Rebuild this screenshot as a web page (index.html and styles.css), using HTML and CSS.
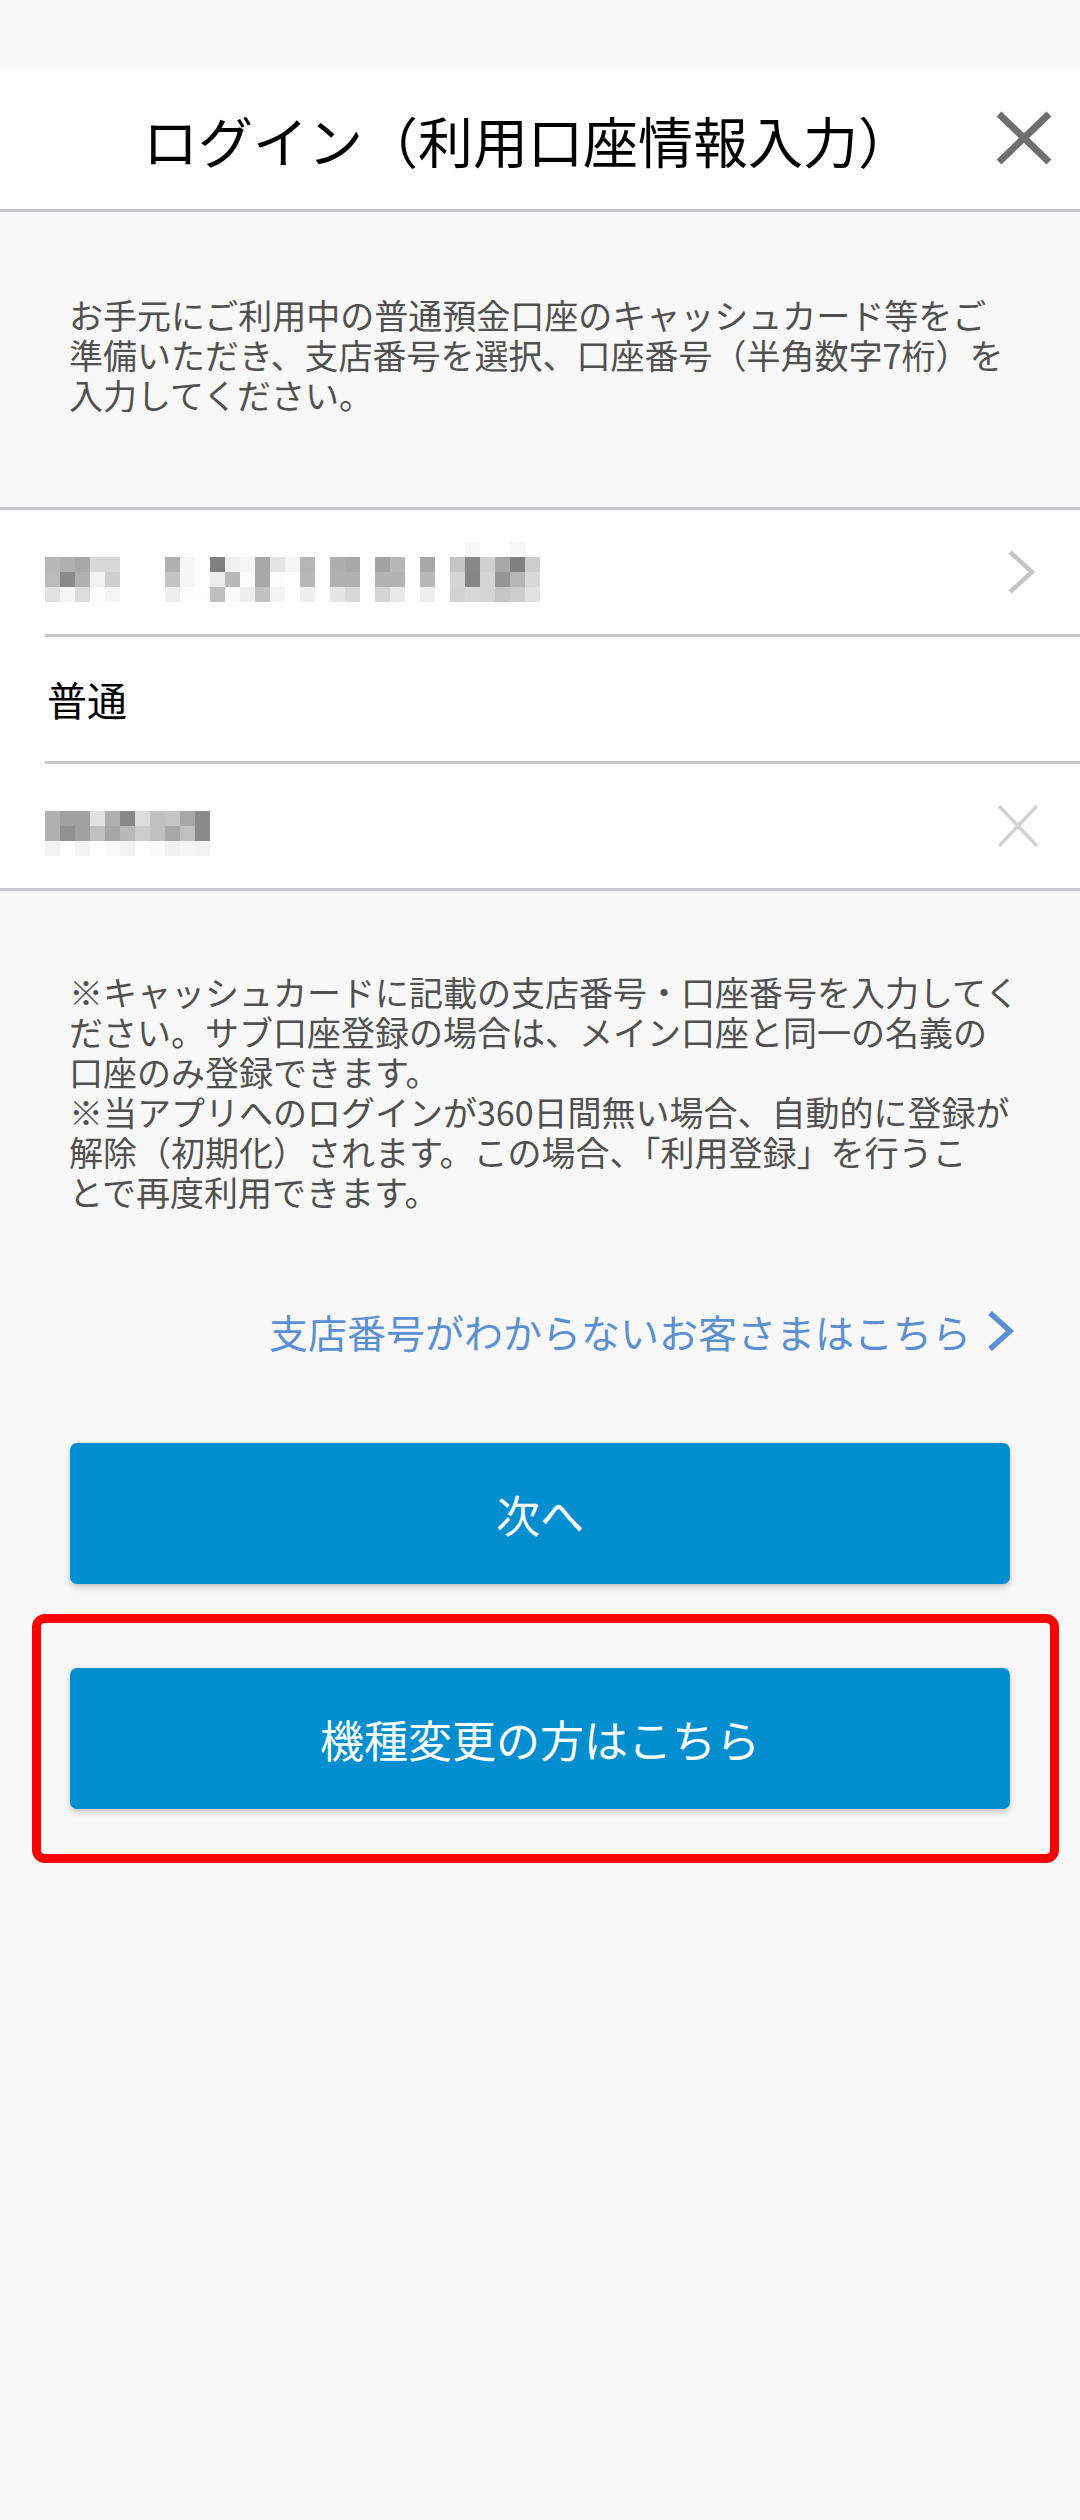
FILE: index.html
```html
<!DOCTYPE html>
<html lang="ja">

<head>
    <meta charset="UTF-8">
    <title>ログイン（利用口座情報入力）</title>
    <link rel="stylesheet" href="styles.css">
</head>

<body>
    <div class="status-bar"></div>
    <div class="header">
        <h1 class="header-title">ログイン（利用口座情報入力）</h1>
        <svg class="header-close" width="60" height="60" viewBox="0 0 60 60">
            <path d="M7 5 L57 53 M57 5 L7 53" stroke="#6f6f6f" stroke-width="7" fill="none"/>
        </svg>
    </div>

    <div class="intro">
        <p>お手元にご利用中の普通預金口座のキャッシュカード等をご<br>準備いただき、支店番号を選択、口座番号（半角数字7桁）を<br>入力してください。</p>
    </div>

    <ul class="fields">
        <li class="field">
            <!-- 支店名 (モザイク) -->
            <svg class="mosaic" width="500" height="60" viewBox="0 0 500 60" shape-rendering="crispEdges">
                <rect x="0" y="15" width="15" height="15" fill="#b8b8b8"/><rect x="0" y="30" width="15" height="15" fill="#bbbbbb"/><rect x="0" y="45" width="15" height="15" fill="#e2e2e2"/>
                <rect x="15" y="15" width="15" height="15" fill="#b0b0b0"/><rect x="15" y="30" width="15" height="15" fill="#8a8a8a"/><rect x="15" y="45" width="15" height="15" fill="#f5f5f5"/>
                <rect x="30" y="15" width="15" height="15" fill="#a8a8a8"/><rect x="30" y="30" width="15" height="15" fill="#b0b0b0"/><rect x="30" y="45" width="15" height="15" fill="#dcdcdc"/>
                <rect x="45" y="15" width="15" height="15" fill="#d8d8d8"/><rect x="45" y="30" width="15" height="15" fill="#f2f2f2"/><rect x="45" y="45" width="15" height="15" fill="#fcfcfc"/>
                <rect x="60" y="15" width="15" height="15" fill="#d8d8d8"/><rect x="60" y="30" width="15" height="15" fill="#cfcfcf"/><rect x="60" y="45" width="15" height="15" fill="#f5f5f5"/>

                <rect x="120" y="15" width="15" height="15" fill="#b0b0b0"/><rect x="120" y="30" width="15" height="15" fill="#c4c4c4"/><rect x="120" y="45" width="15" height="15" fill="#eeeeee"/>
                <rect x="135" y="15" width="15" height="15" fill="#f7f7f7"/><rect x="135" y="30" width="15" height="15" fill="#f7f7f7"/><rect x="135" y="45" width="15" height="15" fill="#fdfdfd"/>
                <rect x="150" y="45" width="15" height="15" fill="#fdfdfd"/>
                <rect x="165" y="15" width="15" height="15" fill="#808080"/><rect x="165" y="30" width="15" height="15" fill="#ededed"/><rect x="165" y="45" width="15" height="15" fill="#bebebe"/>
                <rect x="180" y="15" width="15" height="15" fill="#f0f0f0"/><rect x="180" y="30" width="15" height="15" fill="#b8b8b8"/><rect x="180" y="45" width="15" height="15" fill="#fafafa"/>
                <rect x="195" y="15" width="15" height="15" fill="#f7f7f7"/><rect x="195" y="30" width="15" height="15" fill="#fcfcfc"/><rect x="195" y="45" width="15" height="15" fill="#efefef"/>
                <rect x="210" y="15" width="15" height="15" fill="#a8a8a8"/><rect x="210" y="30" width="15" height="15" fill="#a8a8a8"/><rect x="210" y="45" width="15" height="15" fill="#c0c0c0"/>
                <rect x="225" y="15" width="15" height="15" fill="#e5e5e5"/><rect x="225" y="30" width="15" height="15" fill="#fdfdfd"/><rect x="225" y="45" width="15" height="15" fill="#f3f3f3"/>
                <rect x="240" y="15" width="15" height="15" fill="#f5f5f5"/>
                <rect x="255" y="15" width="15" height="15" fill="#b5b5b5"/><rect x="255" y="30" width="15" height="15" fill="#b8b8b8"/><rect x="255" y="45" width="15" height="15" fill="#efefef"/>

                <rect x="285" y="15" width="15" height="15" fill="#aeaeae"/><rect x="285" y="30" width="15" height="15" fill="#b0b0b0"/><rect x="285" y="45" width="15" height="15" fill="#e5e5e5"/>
                <rect x="300" y="15" width="15" height="15" fill="#a8a8a8"/><rect x="300" y="30" width="15" height="15" fill="#b0b0b0"/><rect x="300" y="45" width="15" height="15" fill="#d8d8d8"/>

                <rect x="330" y="15" width="15" height="15" fill="#a3a3a3"/><rect x="330" y="30" width="15" height="15" fill="#b3b3b3"/><rect x="330" y="45" width="15" height="15" fill="#d5d5d5"/>
                <rect x="345" y="15" width="15" height="15" fill="#b8b8b8"/><rect x="345" y="30" width="15" height="15" fill="#b3b3b3"/><rect x="345" y="45" width="15" height="15" fill="#e8e8e8"/>

                <rect x="375" y="15" width="15" height="15" fill="#a8a8a8"/><rect x="375" y="30" width="15" height="15" fill="#b8b8b8"/><rect x="375" y="45" width="15" height="15" fill="#eeeeee"/>

                <rect x="405" y="15" width="15" height="15" fill="#c5c5c5"/><rect x="405" y="30" width="15" height="15" fill="#d5d5d5"/><rect x="405" y="45" width="15" height="15" fill="#d2d2d2"/>
                <rect x="420" y="0" width="15" height="15" fill="#f8f8f8"/><rect x="420" y="15" width="15" height="15" fill="#888888"/><rect x="420" y="30" width="15" height="15" fill="#858585"/><rect x="420" y="45" width="15" height="15" fill="#d8d8d8"/>
                <rect x="435" y="15" width="15" height="15" fill="#d0d0d0"/><rect x="435" y="30" width="15" height="15" fill="#d5d5d5"/><rect x="435" y="45" width="15" height="15" fill="#d5d5d5"/>
                <rect x="450" y="15" width="15" height="15" fill="#a8a8a8"/><rect x="450" y="30" width="15" height="15" fill="#959595"/><rect x="450" y="45" width="15" height="15" fill="#c5c5c5"/>
                <rect x="465" y="0" width="15" height="15" fill="#f8f8f8"/><rect x="465" y="15" width="15" height="15" fill="#808080"/><rect x="465" y="30" width="15" height="15" fill="#b5b5b5"/><rect x="465" y="45" width="15" height="15" fill="#cccccc"/>
                <rect x="480" y="15" width="15" height="15" fill="#cccccc"/><rect x="480" y="30" width="15" height="15" fill="#d8d8d8"/><rect x="480" y="45" width="15" height="15" fill="#e2e2e2"/>
            </svg>
            <svg class="field-icon" width="40" height="50" viewBox="0 0 40 50">
                <path d="M12 5 L34 25 L12 45" stroke="#c6c6c6" stroke-width="4.5" fill="none"/>
            </svg>
        </li>
        <li class="field">
            <span class="field-text">普通</span>
        </li>
        <li class="field">
            <!-- 口座番号 (モザイク) -->
            <svg class="mosaic" width="165" height="60" viewBox="0 0 165 60" shape-rendering="crispEdges">
                <rect x="0" y="15" width="15" height="15" fill="#b0b0b0"/><rect x="0" y="30" width="15" height="15" fill="#b0b0b0"/><rect x="0" y="45" width="15" height="15" fill="#f3f3f3"/>
                <rect x="15" y="15" width="15" height="15" fill="#a0a0a0"/><rect x="15" y="30" width="15" height="15" fill="#909090"/><rect x="15" y="45" width="15" height="15" fill="#fefefe"/>
                <rect x="30" y="15" width="15" height="15" fill="#a0a0a0"/><rect x="30" y="30" width="15" height="15" fill="#a0a0a0"/><rect x="30" y="45" width="15" height="15" fill="#f3f3f3"/>
                <rect x="45" y="15" width="15" height="15" fill="#e2e2e2"/><rect x="45" y="30" width="15" height="15" fill="#c0c0c0"/><rect x="45" y="45" width="15" height="15" fill="#fefefe"/>
                <rect x="60" y="15" width="15" height="15" fill="#b0b0b0"/><rect x="60" y="30" width="15" height="15" fill="#a5a5a5"/><rect x="60" y="45" width="15" height="15" fill="#fbfbfb"/>
                <rect x="75" y="15" width="15" height="15" fill="#888888"/><rect x="75" y="30" width="15" height="15" fill="#b8b8b8"/><rect x="75" y="45" width="15" height="15" fill="#f3f3f3"/>
                <rect x="90" y="15" width="15" height="15" fill="#dcdcdc"/><rect x="90" y="30" width="15" height="15" fill="#cccccc"/><rect x="90" y="45" width="15" height="15" fill="#fefefe"/>
                <rect x="105" y="15" width="15" height="15" fill="#c0c0c0"/><rect x="105" y="30" width="15" height="15" fill="#c0c0c0"/><rect x="105" y="45" width="15" height="15" fill="#fbfbfb"/>
                <rect x="120" y="15" width="15" height="15" fill="#c5c5c5"/><rect x="120" y="30" width="15" height="15" fill="#a8a8a8"/><rect x="120" y="45" width="15" height="15" fill="#f0f0f0"/>
                <rect x="135" y="15" width="15" height="15" fill="#a8a8a8"/><rect x="135" y="30" width="15" height="15" fill="#c0c0c0"/><rect x="135" y="45" width="15" height="15" fill="#f5f5f5"/>
                <rect x="150" y="15" width="15" height="15" fill="#8a8a8a"/><rect x="150" y="30" width="15" height="15" fill="#8a8a8a"/><rect x="150" y="45" width="15" height="15" fill="#f3f3f3"/>
            </svg>
            <svg class="field-icon" width="40" height="44" viewBox="0 0 40 44">
                <path d="M1 2 L39 42 M39 2 L1 42" stroke="#d2d2d2" stroke-width="3.5" fill="none"/>
            </svg>
        </li>
    </ul>

    <div class="notes">
        <p>※キャッシュカードに記載の支店番号・口座番号を入力してく<br>ださい。サブ口座登録の場合は、メイン口座と同一の名義の<br>口座のみ登録できます。<br>※当アプリへのログインが360日間無い場合、自動的に登録が<br>解除（初期化）されます。この場合、「利用登録」を行うこ<br>とで再度利用できます。</p>
    </div>

    <div class="link-row">
        <span class="link-text">支店番号がわからないお客さまはこちら</span>
        <svg class="link-arrow" width="30" height="44" viewBox="0 0 30 44">
            <path d="M5 4 L25 22 L5 40" stroke="#5a8fd2" stroke-width="5.5" fill="none"/>
        </svg>
    </div>

    <div class="actions">
        <div class="btn">次へ</div>
        <div class="btn-wrap">
            <div class="btn">機種変更の方はこちら</div>
            <div class="highlight"></div>
        </div>
    </div>
</body>

</html>
```

FILE: styles.css
```css
body,
div,
ul,
li,
h1,
p,
span {
    padding: 0;
    margin: 0;
}

li {
    list-style: none;
}

body {
    width: 1080px;
    min-height: 2520px;
    background: #f8f8f8;
    font-family: "Noto Sans CJK JP", "Noto Sans", sans-serif;
}

.status-bar {
    height: 68px;
}

.header {
    display: flex;
    align-items: center;
    height: 141px;
    padding: 0 28px 0 64px;
    background: #fff;
    border-bottom: 3px solid #c8c8cc;
}

.header-title {
    flex: 1;
    text-align: center;
    font-size: 55px;
    font-weight: 400;
    color: #000;
}

.header-close {
    display: block;
}

.intro {
    padding: 83px 30px 92px 69px;
    font-size: 34px;
    line-height: 40px;
    color: #505050;
    white-space: nowrap;
}

.fields {
    background: #fff;
    border-top: 3px solid #c8c8cc;
    border-bottom: 3px solid #c8c8cc;
}

.field {
    display: flex;
    align-items: center;
    justify-content: space-between;
    height: 124px;
    margin-left: 45px;
    padding-right: 42px;
    border-bottom: 3px solid #c8c8cc;
}

.field:last-child {
    border-bottom: none;
}

.field .mosaic {
    display: block;
}

.field-text {
    font-size: 40px;
    color: #000;
    padding-left: 2px;
}

.field-icon {
    display: block;
}

.notes {
    padding: 81px 30px 0 69px;
    font-size: 34px;
    line-height: 40px;
    color: #505050;
    white-space: nowrap;
}

.link-row {
    display: flex;
    justify-content: flex-end;
    align-items: center;
    gap: 14px;
    margin-top: 96px;
    padding-right: 65px;
    height: 46px;
}

.link-text {
    font-size: 39px;
    line-height: 46px;
    color: #5b8fd3;
}

.link-arrow {
    display: block;
}

.actions {
    display: flex;
    flex-direction: column;
    gap: 84px;
    padding: 89px 70px 0;
}

.btn {
    height: 141px;
    display: flex;
    align-items: center;
    justify-content: center;
    font-size: 44px;
    color: #fff;
    background: #028ecf;
    border-radius: 7px;
    box-shadow: 0 3px 6px rgba(0, 0, 0, 0.22);
}

.btn-wrap {
    position: relative;
}

.highlight {
    position: absolute;
    top: -54px;
    left: -38px;
    right: -49px;
    bottom: -54px;
    border: 9px solid #ff0000;
    border-radius: 13px;
    pointer-events: none;
}
```
